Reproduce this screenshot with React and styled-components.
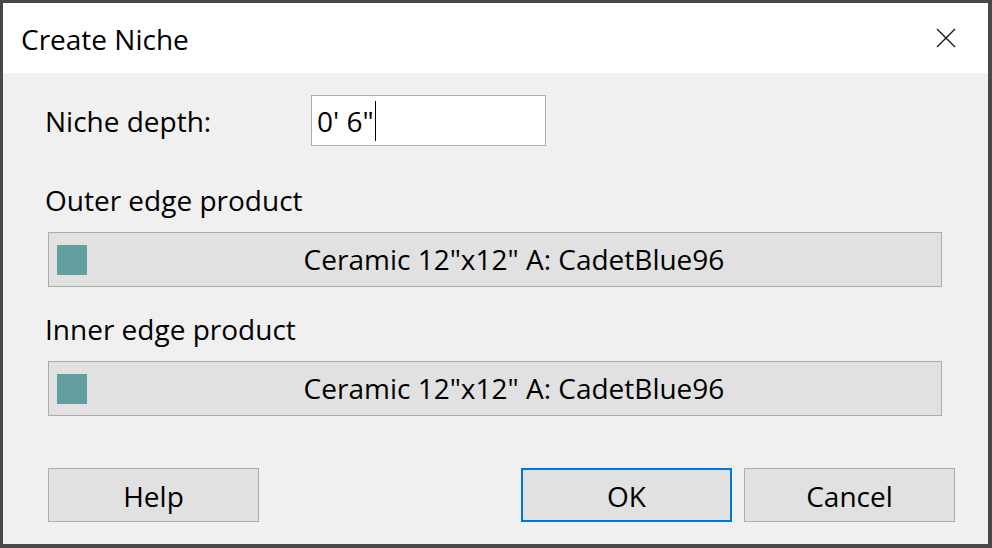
import React from "react";
import styled, { createGlobalStyle } from "styled-components";

const Global = createGlobalStyle`
  html, body { margin: 0; padding: 0; background: #454545; }
  body { font-family: "Open Sans", "Noto Sans", "Liberation Sans", sans-serif; color: #000; }
`;

const Frame = styled.div`
  width: 992px;
  height: 548px;
  box-sizing: border-box;
  padding: 3px 4px 4px 3px;
  background: #484848;
`;

const Dialog = styled.div`
  height: 100%;
  display: flex;
  flex-direction: column;
  background: #f0f0f0;
`;

const TitleBar = styled.div`
  height: 70px;
  flex: none;
  background: #fff;
  display: flex;
  align-items: center;
  justify-content: space-between;
  padding: 0 32px 0 18px;
`;

const Title = styled.div`
  font-size: 28px;
  line-height: 1;
  padding-top: 2px;
`;

const CloseButton = styled.button`
  border: 0;
  background: none;
  padding: 0;
  width: 20px;
  height: 20px;
  display: flex;
`;

const Body = styled.div`
  flex: 1;
  display: flex;
  flex-direction: column;
  padding: 22px 33px 22px 42px;
`;

const FieldRow = styled.div`
  display: flex;
  align-items: center;
`;

const Label = styled.div`
  font-size: 28px;
  line-height: 32px;
  width: ${(p) => p.$width || "auto"};
  margin-top: ${(p) => p.$top || 0}px;
`;

const TextField = styled.div`
  width: 235px;
  height: 51px;
  box-sizing: border-box;
  border: 1px solid #adadad;
  background: #fff;
  display: flex;
  align-items: center;
  padding-left: 5px;
  font-size: 28px;
`;

const Caret = styled.span`
  display: inline-block;
  width: 1px;
  height: 40px;
  background: #000;
  margin-left: 1px;
`;

const ProductButton = styled.div`
  margin: 16px 13px 0 3px;
  height: 55px;
  box-sizing: border-box;
  border: 1px solid #adadad;
  background: #e1e1e1;
  display: flex;
  align-items: center;
  padding-left: 8px;
`;

const Swatch = styled.div`
  width: 30px;
  height: 30px;
  background: ${(p) => p.$color};
  flex: none;
`;

const ProductName = styled.div`
  flex: 1;
  text-align: center;
  font-size: 28px;
  padding-bottom: 2px;
`;

const Footer = styled.div`
  margin-top: auto;
  margin-left: 3px;
  display: flex;
  gap: 12px;
`;

const Button = styled.button`
  width: 211px;
  height: 54px;
  box-sizing: border-box;
  border: ${(p) => (p.$primary ? "2px solid #0078d7" : "1px solid #adadad")};
  background: #e1e1e1;
  font-family: inherit;
  font-size: 28px;
  color: #000;
  padding: 1px 0 0;
`;

const Spacer = styled.div`
  flex: 1;
`;

const products = [
  { label: "Outer edge product", name: 'Ceramic 12"x12" A: CadetBlue96', color: "#629e9f" },
  { label: "Inner edge product", name: 'Ceramic 12"x12" A: CadetBlue96', color: "#629e9f" },
];

export default function App() {
  return (
    <Frame>
      <Global />
      <Dialog>
        <TitleBar>
          <Title>Create Niche</Title>
          <CloseButton aria-label="Close">
            <svg width="20" height="20" viewBox="0 0 20 20">
              <path d="M1 1 L19 19 M19 1 L1 19" stroke="#1a1a1a" strokeWidth="1.4" fill="none" />
            </svg>
          </CloseButton>
        </TitleBar>
        <Body>
          <FieldRow>
            <Label $width="266px">Niche depth:</Label>
            <TextField>
              0' 6"
              <Caret />
            </TextField>
          </FieldRow>
          {products.map((p, i) => (
            <React.Fragment key={p.label}>
              <Label $top={i === 0 ? 38 : 26}>{p.label}</Label>
              <ProductButton>
                <Swatch $color={p.color} />
                <ProductName>{p.name}</ProductName>
              </ProductButton>
            </React.Fragment>
          ))}
          <Footer>
            <Button>Help</Button>
            <Spacer />
            <Button $primary>OK</Button>
            <Button>Cancel</Button>
          </Footer>
        </Body>
      </Dialog>
    </Frame>
  );
}
